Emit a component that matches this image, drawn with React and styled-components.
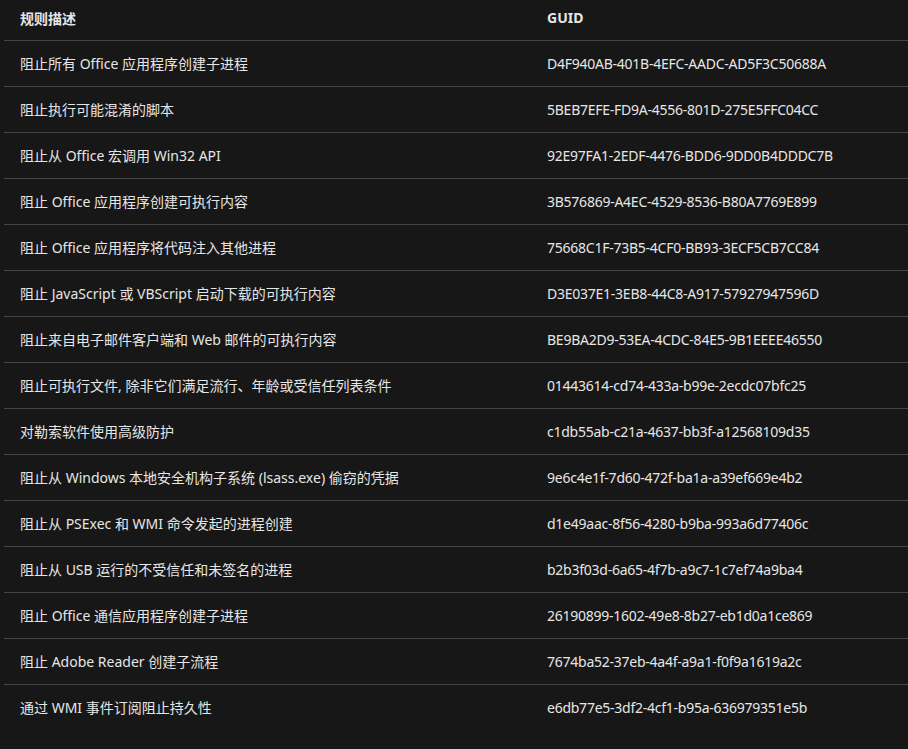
import styled, { createGlobalStyle } from 'styled-components';

const GlobalStyle = createGlobalStyle`
    html, body {
        margin: 0;
        padding: 0;
        background: #171717;
    }
    body {
        font-family: "Noto Sans", "Noto Sans CJK SC", sans-serif;
        color: #e6e6e6;
    }
`;

const Page = styled.div`
    min-height: 749px;
    padding-left: 4px;
    background: #171717;
`;

const Table = styled.table`
    width: 100%;
    border-collapse: collapse;
    font-size: 14px;
`;

const HeadCell = styled.th`
    text-align: left;
    font-weight: 700;
    height: 40px;
    padding: 0 16px 4px;
    box-sizing: border-box;
    color: #e6e6e6;
    border-bottom: 1px solid #444;
    width: ${(p) => p.$w || 'auto'};
`;

const Row = styled.tr`
    border-bottom: 1px solid #444;
    &:last-child {
        border-bottom: none;
    }
`;

const Cell = styled.td`
    height: 46px;
    padding: 0 16px;
    box-sizing: border-box;
    white-space: nowrap;
    color: #e6e6e6;
    letter-spacing: ${(p) => (p.$guid ? '-0.25px' : 'normal')};
`;

const rules = [
    ['阻止所有 Office 应用程序创建子进程', 'D4F940AB-401B-4EFC-AADC-AD5F3C50688A'],
    ['阻止执行可能混淆的脚本', '5BEB7EFE-FD9A-4556-801D-275E5FFC04CC'],
    ['阻止从 Office 宏调用 Win32 API', '92E97FA1-2EDF-4476-BDD6-9DD0B4DDDC7B'],
    ['阻止 Office 应用程序创建可执行内容', '3B576869-A4EC-4529-8536-B80A7769E899'],
    ['阻止 Office 应用程序将代码注入其他进程', '75668C1F-73B5-4CF0-BB93-3ECF5CB7CC84'],
    ['阻止 JavaScript 或 VBScript 启动下载的可执行内容', 'D3E037E1-3EB8-44C8-A917-57927947596D'],
    ['阻止来自电子邮件客户端和 Web 邮件的可执行内容', 'BE9BA2D9-53EA-4CDC-84E5-9B1EEEE46550'],
    ['阻止可执行文件, 除非它们满足流行、年龄或受信任列表条件', '01443614-cd74-433a-b99e-2ecdc07bfc25'],
    ['对勒索软件使用高级防护', 'c1db55ab-c21a-4637-bb3f-a12568109d35'],
    ['阻止从 Windows 本地安全机构子系统 (lsass.exe) 偷窃的凭据', '9e6c4e1f-7d60-472f-ba1a-a39ef669e4b2'],
    ['阻止从 PSExec 和 WMI 命令发起的进程创建', 'd1e49aac-8f56-4280-b9ba-993a6d77406c'],
    ['阻止从 USB 运行的不受信任和未签名的进程', 'b2b3f03d-6a65-4f7b-a9c7-1c7ef74a9ba4'],
    ['阻止 Office 通信应用程序创建子进程', '26190899-1602-49e8-8b27-eb1d0a1ce869'],
    ['阻止 Adobe Reader 创建子流程', '7674ba52-37eb-4a4f-a9a1-f0f9a1619a2c'],
    ['通过 WMI 事件订阅阻止持久性', 'e6db77e5-3df2-4cf1-b95a-636979351e5b'],
];

const App = () => {
    return (
        <Page>
            <GlobalStyle />
            <Table>
                <thead>
                    <tr>
                        <HeadCell $w="527px">规则描述</HeadCell>
                        <HeadCell>GUID</HeadCell>
                    </tr>
                </thead>
                <tbody>
                    {rules.map(([desc, guid]) => (
                        <Row key={guid}>
                            <Cell>{desc}</Cell>
                            <Cell $guid>{guid}</Cell>
                        </Row>
                    ))}
                </tbody>
            </Table>
        </Page>
    );
};

export default App;
